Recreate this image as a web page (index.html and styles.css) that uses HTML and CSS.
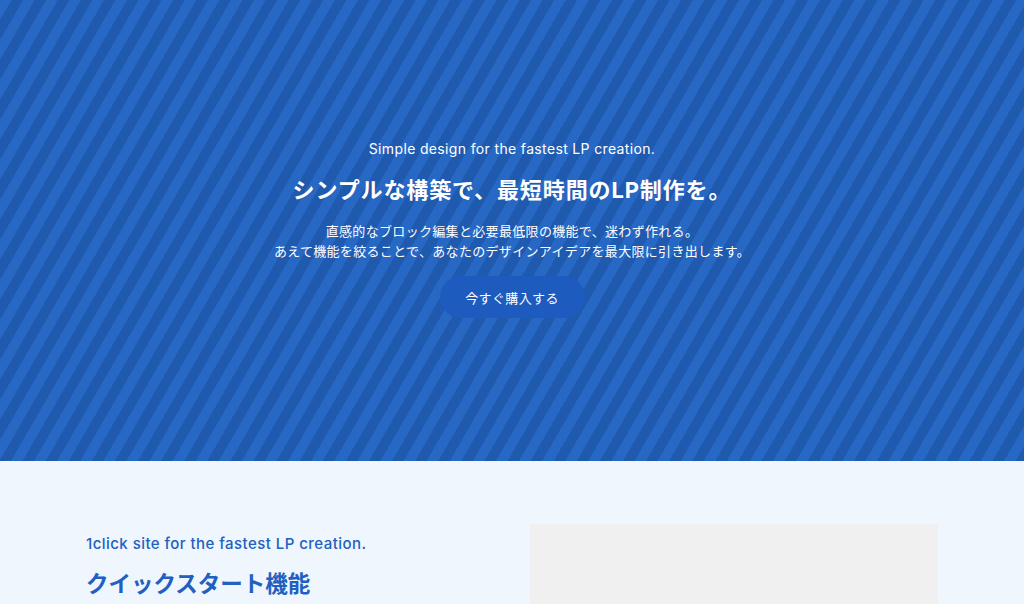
FILE: index.html
```html
<!DOCTYPE html>
<html lang="ja">
<head>
<meta charset="utf-8">
<title>LP</title>
<link rel="stylesheet" href="styles.css">
</head>
<body>
<section class="hero">
  <p class="hero-sub">Simple design for the fastest LP creation.</p>
  <h1 class="hero-title">シンプルな構築で、最短時間のLP制作を。</h1>
  <p class="hero-text">直感的なブロック編集と必要最低限の機能で、迷わず作れる。<br>あえて機能を絞ることで、あなたのデザインアイデアを最大限に引き出します。</p>
  <a class="hero-btn" href="#">今すぐ購入する</a>
</section>
<section class="feature">
  <div class="feature-inner">
    <div class="feature-text">
      <p class="feature-sub">1click site for the fastest LP creation.</p>
      <h2 class="feature-title">クイックスタート機能</h2>
    </div>
    <div class="feature-media"></div>
  </div>
</section>
</body>
</html>
```
FILE: styles.css
```css
* { box-sizing: border-box; }
html, body { margin: 0; padding: 0; }
body {
  font-family: "Inter", "Noto Sans CJK JP", sans-serif;
  background: #eff6fe;
  color: #fff;
}
.hero {
  height: 461px;
  display: flex;
  flex-direction: column;
  align-items: center;
  justify-content: center;
  text-align: center;
  padding-bottom: 4px;
  background: repeating-linear-gradient(120deg, #2668c4 0px, #2668c4 10px, #1f5aaf 10px, #1f5aaf 20px);
}
.hero-sub {
  margin: 0;
  font-size: 14px;
  line-height: 20px;
  letter-spacing: 0.025em;
}
.hero-title {
  margin: 15px 0 0;
  font-size: 22px;
  line-height: 32px;
  font-weight: 700;
  letter-spacing: 0.04em;
}
.hero-text {
  margin: 15px 0 0;
  font-size: 13px;
  line-height: 20px;
  letter-spacing: 0.025em;
}
.hero-btn {
  margin-top: 15px;
  display: flex;
  align-items: center;
  justify-content: center;
  width: 145px;
  height: 42px;
  border-radius: 21px;
  background: #1d5bbe;
  color: #fff;
  font-size: 13px;
  letter-spacing: 0.03em;
  text-decoration: none;
}
.feature {
  padding-top: 63px;
}
.feature-inner {
  width: 852px;
  margin: 0 auto;
  display: grid;
  grid-template-columns: 408px 408px;
  justify-content: space-between;
}
.feature-text {
  padding-top: 10px;
  color: #2160c0;
}
.feature-sub {
  margin: 0;
  font-size: 15px;
  line-height: 20px;
  font-weight: 500;
  letter-spacing: 0.03em;
}
.feature-title {
  margin: 14px 0 0;
  font-size: 22.5px;
  line-height: 32px;
  font-weight: 700;
}
.feature-media {
  height: 300px;
  background: #f0f0f0;
}
```
